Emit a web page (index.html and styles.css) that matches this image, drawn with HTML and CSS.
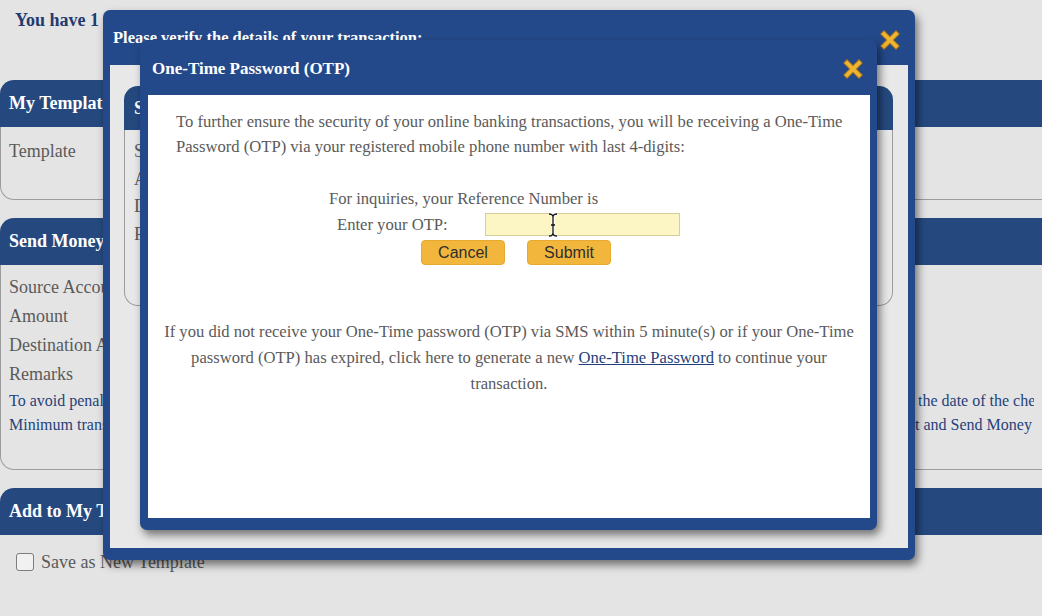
FILE: index.html
```html
<!DOCTYPE html>
<html lang="en">
<head>
  <meta charset="UTF-8" />
  <meta name="viewport" content="width=device-width, initial-scale=1.0" />
  <title>Send Money - One-Time Password</title>
  <link rel="stylesheet" href="styles.css">
</head>
<body>
  <p class="notice">You have 1 transaction awaiting your confirmation.</p>

  <section class="panel">
    <h2 class="panel-head">My Templates</h2>
    <div class="panel-body panel-body-templates">
      <div class="field">Template</div>
    </div>
  </section>

  <section class="panel">
    <h2 class="panel-head">Send Money</h2>
    <div class="panel-body panel-body-send">
      <div class="field">Source Account</div>
      <div class="field">Amount</div>
      <div class="field">Destination Account</div>
      <div class="field">Remarks</div>
      <div class="note-row"><span class="note-lead">To avoid penalties, please make sure your account has sufficient funds on the transaction date, counted from </span><span>the date of the check issuance.</span></div>
      <div class="note-row"><span class="note-lead note-lead-short">Minimum transaction amount is PHP 1.00. Please review the details before you click Nex</span><span>t and Send Money</span></div>
    </div>
  </section>

  <section class="panel">
    <h2 class="panel-head">Add to My Templates</h2>
    <div class="panel-body panel-body-add">
      <label class="check"><span class="check-box"></span>Save as New Template</label>
    </div>
  </section>

  <!-- verify dialog (behind) -->
  <div class="dialog dialog-verify">
    <div class="dialog-head">
      <span class="dialog-title dialog-title-small">Please verify the details of your transaction:</span>
      <svg class="close-x" width="20" height="20" viewBox="0 0 20 20">
        <path d="M4 4 L16 16 M16 4 L4 16" stroke="#b07a1a" stroke-width="5.5" stroke-linecap="square" />
        <path d="M4 4 L16 16 M16 4 L4 16" stroke="#efb531" stroke-width="3.6" stroke-linecap="square" />
      </svg>
    </div>
    <div class="verify-body">
      <div class="sub-panel">
        <div class="sub-head">Send Money Details</div>
        <div class="sub-body">
          <div class="sub-field">Source Account</div>
          <div class="sub-field">Amount</div>
          <div class="sub-field">Destination Account</div>
          <div class="sub-field">Remarks</div>
        </div>
      </div>
    </div>
  </div>

  <!-- OTP dialog (front) -->
  <div class="dialog dialog-otp">
    <div class="dialog-head">
      <span class="dialog-title">One-Time Password (OTP)</span>
      <svg class="close-x" width="20" height="20" viewBox="0 0 20 20">
        <path d="M4 4 L16 16 M16 4 L4 16" stroke="#b07a1a" stroke-width="5.5" stroke-linecap="square" />
        <path d="M4 4 L16 16 M16 4 L4 16" stroke="#efb531" stroke-width="3.6" stroke-linecap="square" />
      </svg>
    </div>
    <div class="otp-body">
      <p class="otp-intro">To further ensure the security of your online banking transactions, you will be receiving a One-Time Password (OTP) via your registered mobile phone number with last 4-digits:</p>

      <div class="otp-form">
        <div class="otp-ref">For inquiries, your Reference Number is</div>
        <div class="otp-row">
          <label class="otp-label" for="otp">Enter your OTP:</label>
          <div class="otp-input-wrap">
            <input id="otp" class="otp-input" type="text" />
            <svg class="ibeam" width="12" height="26" viewBox="0 0 12 26">
              <path d="M2 2 Q6 2 6 5 L6 21 Q6 24 2 24 M10 2 Q6 2 6 5 M6 21 Q6 24 10 24 M4 13 L8 13" fill="none" stroke="#fff" stroke-width="3" />
              <path d="M2 2 Q6 2 6 5 L6 21 Q6 24 2 24 M10 2 Q6 2 6 5 M6 21 Q6 24 10 24 M4 13 L8 13" fill="none" stroke="#111" stroke-width="1.3" />
            </svg>
          </div>
        </div>
        <div class="otp-actions">
          <button class="btn">Cancel</button>
          <button class="btn">Submit</button>
        </div>
      </div>

      <p class="otp-resend">If you did not receive your One-Time password (OTP) via SMS within 5 minute(s) or if your One-Time password (OTP) has expired, click here to generate a new <a href="#">One-Time Password</a> to continue your transaction.</p>
    </div>
  </div>
</body>
</html>
```

FILE: styles.css
```css
body {
  margin: 0;
  background: #e4e4e4;
  font-family: "Liberation Serif", "Times New Roman", serif;
  color: #5a5a5a;
  overflow: hidden;
  height: 616px;
  position: relative;
}

.notice {
  margin: 0;
  padding: 8px 0 0 15px;
  line-height: 24px;
  font-size: 18px;
  font-weight: bold;
  color: #1f3b6f;
  white-space: nowrap;
}

/* background panels */
.panel {
  margin-top: 18px;
}

.panel:first-of-type {
  margin-top: 48px;
}

.panel-head {
  margin: 0;
  height: 47px;
  line-height: 47px;
  padding-left: 9px;
  background: #25497f;
  color: #fff;
  font-size: 18px;
  font-weight: bold;
  border-top-left-radius: 14px;
  white-space: nowrap;
  overflow: hidden;
}

.panel-body {
  box-sizing: border-box;
  border: 1px solid #9c9c9c;
  border-top: none;
  border-right: none;
  border-bottom-left-radius: 14px;
  padding: 10px 8px 0;
  font-size: 18px;
}

.panel-body-templates {
  height: 73px;
}

.panel-body-send {
  height: 205px;
  padding-top: 8px;
}

.panel-body-add {
  border: none;
  padding: 17px 16px 0;
}

.field {
  line-height: 29px;
  white-space: nowrap;
}

.panel-body-templates .field {
  line-height: 28px;
}

.note-row {
  display: flex;
  white-space: nowrap;
  overflow: hidden;
  line-height: 24px;
  font-size: 16px;
  color: #24427a;
}

.note-lead {
  width: 909px;
  flex: none;
  overflow: hidden;
}

.note-lead-short {
  width: 906px;
}

.check {
  display: flex;
  align-items: center;
  gap: 7px;
  line-height: 20px;
}

.check-box {
  width: 16px;
  height: 16px;
  border: 1.5px solid #7d7d7d;
  border-radius: 3px;
  background: #f1f1f1;
}

/* dialogs */
.dialog {
  position: absolute;
  box-sizing: border-box;
  background: #24498a;
  border-radius: 7px;
  box-shadow: 3px 5px 9px rgba(0, 0, 0, 0.5);
  display: flex;
  flex-direction: column;
}

.dialog-head {
  height: 55px;
  flex: none;
  display: flex;
  align-items: center;
  justify-content: space-between;
}

.dialog-title {
  color: #fff;
  font-size: 17px;
  font-weight: bold;
}

.dialog-title-small {
  font-size: 16.5px;
}

.dialog-verify {
  left: 103px;
  top: 10px;
  width: 812px;
  height: 550px;
  padding: 0 7px 12px;
}

.dialog-verify .dialog-head {
  padding: 0 8px 0 3px;
}

.dialog-verify .close-x {
  margin-top: 4px;
}

.verify-body {
  flex: 1;
  background: #e8e8e8;
  padding: 21px 15px 0 14px;
}

.sub-head {
  height: 44px;
  line-height: 44px;
  padding-left: 10px;
  background: #25497f;
  color: #fff;
  font-size: 18px;
  font-weight: bold;
  border-radius: 14px 14px 0 0;
}

.sub-body {
  box-sizing: border-box;
  height: 176px;
  border: 1px solid #9c9c9c;
  border-top: none;
  border-radius: 0 0 14px 14px;
  padding: 8px 9px 0;
  font-size: 18px;
}

.sub-field {
  line-height: 27.5px;
}

.dialog-otp {
  left: 140px;
  top: 40px;
  width: 737px;
  height: 490px;
  padding: 0 7px 12px 8px;
}

.dialog-otp .dialog-head {
  padding: 0 7px 0 4px;
}

.dialog-otp .dialog-title {
  margin-top: 3px;
}

.dialog-otp .close-x {
  margin-top: 3px;
}

.otp-body {
  flex: 1;
  background: #fff;
  padding-top: 14px;
  font-size: 16.6px;
  color: #5a5a5a;
}

.otp-intro {
  margin: 0 26px 0 28px;
  line-height: 25px;
}

.otp-form {
  margin: 27px 0 0 181px;
  width: 351px;
}

.otp-ref {
  line-height: 25px;
}

.otp-row {
  display: flex;
  align-items: center;
  margin-top: 2px;
}

.otp-label {
  width: 148px;
  padding-left: 8px;
  flex: none;
}

.otp-input-wrap {
  position: relative;
}

.otp-input {
  display: block;
  box-sizing: border-box;
  width: 195px;
  height: 23px;
  margin: 0;
  border: 1px solid #d7cd98;
  background: #fcf5c4;
}

.ibeam {
  position: absolute;
  left: 62px;
  top: -1px;
}

.otp-actions {
  display: flex;
  gap: 22px;
  margin: 4px 0 0 92px;
}

.btn {
  width: 84px;
  height: 25px;
  padding: 0;
  border: 1px solid #e7a92f;
  border-radius: 4px;
  background: #f2b63d;
  color: #2e2e2e;
  font-family: "Liberation Sans", Arial, sans-serif;
  font-size: 16px;
  cursor: pointer;
}

.otp-resend {
  margin: 54px 12px 0;
  line-height: 26px;
  text-align: center;
}

.otp-resend a {
  color: #1f3f7c;
}
```
